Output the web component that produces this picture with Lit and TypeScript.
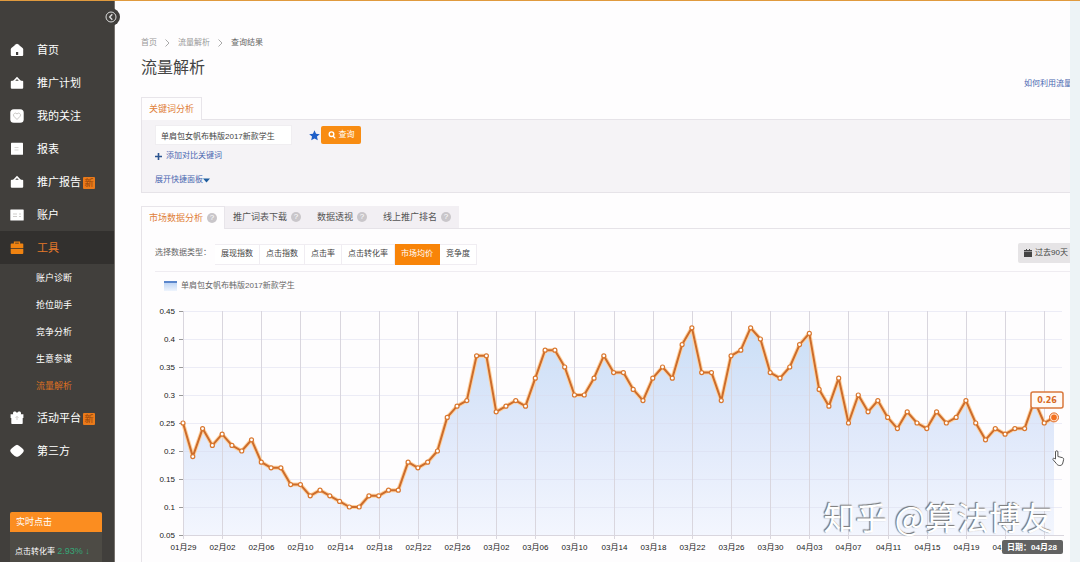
import { LitElement, html, svg, css, nothing } from "lit";
import { customElement, state, query } from "lit/decorators.js";
import { classMap } from "lit/directives/class-map.js";

const fontStack = css`"Liberation Sans", "Noto Sans CJK SC", sans-serif`;

const shapes: Record<string, unknown> = {
  home: svg`<path fill="#fff" d="M6 1.200a1.600 1.600 0 0 1 2 0l4.600 3.900c.4.400.6.800.6 1.400V12a1 1 0 0 1-1 1H1.800a1 1 0 0 1-1-1V6.500c0-.6.2-1 .6-1.400z"/><path fill="#413f3c" d="M6 9h2.200v3H6z"/>`,
  bag: svg`<path fill="none" stroke="#fff" stroke-width="1.600" d="M3.500 5.500 7 2l3.500 3.500"/><rect x=".8" y="4.800" width="12.400" height="8" rx="1" fill="#fff"/>`,
  heart: svg`<rect x=".3" y=".3" width="13.400" height="13.400" rx="3.500" fill="#fff"/><path fill="none" stroke="#c9c7c5" d="M7 10.500 3.800 7.200a1.900 1.900 0 0 1 3.200-2.200 1.900 1.900 0 0 1 3.200 2.200z"/>`,
  report: svg`<rect x="1" y=".8" width="12" height="12" rx=".6" fill="#fff"/><path stroke="#d8d6d4" d="M4.500 5.500h4M4.500 8h4"/>`,
  card: svg`<rect x=".3" y="1.500" width="13.400" height="11" rx=".6" fill="#fff"/><path stroke="#cfcdcb" d="M3 6h4M3 8.500h4M9 6h2M9 8.500h2"/>`,
  tools: svg`<path fill="none" stroke="#f08311" stroke-width="1.300" d="M4.500 3V1.200h5V3"/><path fill="#f08311" d="M1.500 2.500h11a.8.8 0 0 1 .8.8V7H.7V3.300a.8.8 0 0 1 .8-.8zM.7 7.800h12.600V12a1 1 0 0 1-1 1H1.700a1 1 0 0 1-1-1z"/>`,
  gift: svg`<path fill="#fff" d="M.6 3.300h2.600C2.200.8 5-.6 7 2 9-.6 11.800.8 10.800 3.300h2.600V7h-.7v5.300a.7.7 0 0 1-.7.7H2a.7.7 0 0 1-.7-.7V7H.6z"/><path stroke="#cfcdcb" fill="none" d="M5.500 6.500 7 5.500l1.500 1M7 6v3"/>`,
  diamond: svg`<path fill="#fff" d="M7 .8c.8 0 5 3.200 6.300 4.700.6.700.6 1.700 0 2.500-1.300 1.700-4 4.800-6.300 4.800S2 9.700.7 8c-.6-.8-.6-1.800 0-2.500C2 4 6.200.8 7 .8z"/>`,
};

interface MenuItem {
  label: string;
  icon: string;
  fresh?: boolean;
  current?: boolean;
  children?: string[];
}

const menu: MenuItem[] = [
  { label: "首页", icon: "home" },
  { label: "推广计划", icon: "bag" },
  { label: "我的关注", icon: "heart" },
  { label: "报表", icon: "report" },
  { label: "推广报告", icon: "bag", fresh: true },
  { label: "账户", icon: "card" },
  {
    label: "工具",
    icon: "tools",
    current: true,
    children: ["账户诊断", "抢位助手", "竞争分析", "生意参谋", "流量解析"],
  },
  { label: "活动平台", icon: "gift", fresh: true },
  { label: "第三方", icon: "diamond" },
];

@customElement("side-menu")
export class SideMenu extends LitElement {
  static styles = css`
    :host {
      display: flex;
      flex-direction: column;
      position: relative;
      box-sizing: border-box;
      padding-top: 32px;
      background: #413f3c;
      border-right: 1px solid #77726e;
      color: #fff;
      font-family: ${fontStack};
    }
    .collapse {
      position: absolute;
      top: 7px;
      right: -6px;
      width: 18px;
      height: 18px;
      padding: 0;
      border: 0;
      border-radius: 50%;
      background: #413f3c;
    }
    .collapse svg {
      display: block;
      width: 18px;
      height: 18px;
    }
    ul {
      list-style: none;
      margin: 0;
      padding: 0;
    }
    a {
      color: inherit;
      text-decoration: none;
    }
    .item {
      display: flex;
      align-items: center;
      height: 33px;
      padding-left: 10px;
      font-size: 11px;
    }
    .item.current {
      background: #32302e;
      color: #e5792a;
    }
    .icon {
      width: 14px;
      height: 14px;
      margin-right: 13px;
    }
    .fresh {
      margin: 2px 0 0 2px;
      width: 12px;
      height: 12px;
      border-radius: 1px;
      background: #ea7a1a;
      color: #8f3f08;
      font-size: 9px;
      line-height: 12px;
      text-align: center;
    }
    .sub {
      padding: 1px 0;
    }
    .sub a {
      display: block;
      height: 27px;
      padding-left: 36px;
      font-size: 9px;
      line-height: 27px;
    }
    .sub .current {
      color: #dd7022;
    }
    .live {
      margin: 45px 12px 0 10px;
      flex: 1;
      background: #4d4b45;
      border-radius: 2px 2px 0 0;
      font-size: 8px;
    }
    .live h2 {
      margin: 0;
      padding-left: 6px;
      border-radius: 2px 2px 0 0;
      background: #fb8d20;
      font-size: 9px;
      font-weight: 400;
      line-height: 20px;
    }
    .live p {
      margin: 0;
      padding: 9px 0 0 5px;
      line-height: 20px;
      white-space: nowrap;
    }
    .rate {
      color: #35a777;
      font-size: 9px;
    }
  `;

  render() {
    return html`
      <button class="collapse" aria-label="收起菜单">
        <svg viewBox="0 0 18 18" fill="none" stroke="#ddd">
          <circle cx="9" cy="9" r="5" />
          <path d="M10.300 6.300 7.700 9l2.600 2.700" stroke-width="1.400" />
        </svg>
      </button>
      <nav>
        <ul>
          ${menu.map(
            (m) => html`<li>
              <a href="#" class=${classMap({ item: true, current: !!m.current })}>
                <svg class="icon" viewBox="0 0 14 14">${shapes[m.icon]}</svg>
                ${m.label}${m.fresh ? html`<span class="fresh">新</span>` : nothing}
              </a>
              ${m.children
                ? html`<ul class="sub">
                    ${m.children.map(
                      (c) => html`<li><a href="#" class=${classMap({ current: c === "流量解析" })}>${c}</a></li>`
                    )}
                  </ul>`
                : nothing}
            </li>`
          )}
        </ul>
      </nav>
      <section class="live">
        <h2>实时点击</h2>
        <p>点击转化率 <span class="rate">2.93% ↓</span></p>
      </section>
    `;
  }
}

const prices = [
  25, 19, 24, 21, 23, 21, 20, 22, 18, 17, 17, 14, 14, 12, 13, 12, 11, 10, 10, 12, 12, 13, 13, 18, 17, 18, 20, 26, 28,
  29, 37, 37, 27, 28, 29, 28, 33, 38, 38, 35, 30, 30, 33, 37, 34, 34, 31, 29, 33, 35, 33, 39, 42, 34, 34, 29, 37, 38,
  42, 40, 34, 33, 35, 39, 41, 31, 28, 33, 25, 30, 27, 29, 26, 24, 27, 25, 24, 27, 25, 26, 29, 25, 22, 24, 23, 24, 24,
  29, 25, 26,
].map((v) => v / 100);

const yTicks = [0.45, 0.4, 0.35, 0.3, 0.25, 0.2, 0.15, 0.1, 0.05];

const dayLabel = (index: number) => {
  const d = new Date(Date.UTC(2017, 0, 29 + index));
  const two = (n: number) => String(n).padStart(2, "0");
  return `${two(d.getUTCMonth() + 1)}月${two(d.getUTCDate())}`;
};

@customElement("price-chart")
export class PriceChart extends LitElement {
  static styles = css`
    :host {
      display: block;
      height: 262px;
      overflow: hidden;
    }
    svg {
      display: block;
      width: 100%;
      height: 100%;
      font-family: ${fontStack};
      font-size: 8px;
    }
    .grid {
      stroke: #d9d6de;
    }
    .row {
      stroke: #efeaf1;
    }
    .row.over {
      stroke: #d9dcee;
      stroke-opacity: 0.5;
    }
    .tick {
      stroke: #999;
    }
    .label {
      fill: #222;
    }
    .glow {
      fill: none;
      stroke: #ffd2a0;
      stroke-width: 4;
      stroke-linejoin: round;
    }
    .line {
      fill: none;
      stroke: #cc6c2c;
      stroke-width: 2;
      stroke-linejoin: round;
    }
    .dot {
      fill: #fff;
      stroke: #d9772f;
      stroke-width: 1.2;
    }
    .value {
      fill: #d86a25;
      font-family: "DejaVu Sans", sans-serif;
      font-size: 8px;
      font-weight: 700;
    }
    .date {
      fill: #fff;
      font-weight: 700;
    }
  `;

  @state() private width = 928;
  private observer = new ResizeObserver((e) => {
    this.width = e[0].contentRect.width;
  });

  connectedCallback() {
    super.connectedCallback();
    this.observer.observe(this);
  }

  disconnectedCallback() {
    this.observer.disconnect();
    super.disconnectedCallback();
  }

  render() {
    const left = 41;
    const right = this.width - 16;
    const top = 11;
    const bottom = 235;
    const last = prices.length - 1;
    const x = (i: number) => left + ((right - left) * i) / last;
    const y = (v: number) => bottom - ((v - 0.05) / 0.4) * (bottom - top);
    const points = prices.map((v, i) => `${x(i).toFixed(1)},${y(v).toFixed(1)}`).join(" ");
    const days = prices.map((_, i) => i).filter((i) => i % 4 === 0);
    const lx = x(last);
    const ly = y(prices[last]);

    return html`<svg role="img" aria-label="市场均价">
      <defs>
        <linearGradient id="fill" gradientUnits="userSpaceOnUse" x1="0" y1="20" x2="0" y2=${bottom}>
          <stop offset="0" stop-color="#c9def6" />
          <stop offset=".5" stop-color="#dfe8fa" />
          <stop offset="1" stop-color="#f3f6fe" />
        </linearGradient>
      </defs>
      <polygon fill="url(#fill)" points="${left},${bottom} ${points} ${lx},${bottom}" />
      ${yTicks.map((t) => {
        const ty = Math.round(y(t)) + 0.5;
        return svg`<line class="row over" x1=${left} x2=${right + 8} y1=${ty} y2=${ty} />
          <line class="tick" x1=${left - 4} x2=${left} y1=${ty} y2=${ty} />
          <text class="label" x=${left - 8} y=${ty + 2} text-anchor="end">${t}</text>`;
      })}
      ${days.map((i) => {
        const tx = Math.round(x(i)) + 0.5;
        return svg`<line class="grid" x1=${tx} x2=${tx} y1=${top} y2=${bottom + 4} />
          ${
            last - i > 1
              ? svg`<text class="label" x=${tx} y="250" text-anchor="middle">${dayLabel(i)}</text>`
              : nothing
          }`;
      })}
      <line class="grid" x1=${left} x2=${right + 10} y1=${bottom + 0.5} y2=${bottom + 0.5} />
      <polyline class="glow" points=${points} />
      <polyline class="line" points=${points} />
      ${prices.map((v, i) => svg`<circle class="dot" cx=${x(i)} cy=${y(v)} r="2" />`)}
      <circle cx=${lx} cy=${ly} r="4.500" fill="#ffe3cf" stroke="#e2691f" />
      <circle cx=${lx} cy=${ly} r="2.800" fill="#f2701f" />
      <rect x=${lx - 23} y="92" width="32" height="16" rx="2" fill="#fffaf6" stroke="#d9783d" stroke-width="1.500" />
      <text class="value" x=${lx - 7} y="103" text-anchor="middle">0.26</text>
      <rect x=${lx - 52} y="240" width="61" height="14" rx="2" fill="#626262" />
      <text class="date" x=${lx - 22} y="250" text-anchor="middle">日期：${dayLabel(last)}</text>
      <path
        transform="translate(${lx - 2} 150)"
        fill="#fff"
        stroke="#555"
        stroke-linejoin="round"
        d="M3.500 9V2a1.200 1.200 0 0 1 2.400 0v4.500l4.600 1.200c1 .3 1.300 1 1.100 2L10.800 13c-.4 1.700-1.300 2.500-3 2.500-1.600 0-2.500-.6-3.300-1.800L1 9.600c-.4-1 .5-1.700 1.300-1.200z"
      />
    </svg>`;
  }
}

@customElement("app-root")
export class AppRoot extends LitElement {
  static styles = css`
    :host {
      display: grid;
      grid-template-columns: 115px minmax(0, 1fr) 10px;
      box-sizing: border-box;
      min-height: 100vh;
      border-top: 1px solid #e09a3e;
      background: #edf3f6;
      color: #666;
      font-family: ${fontStack};
      font-size: 8px;
      line-height: 12px;
      overflow: hidden;
    }
    side-menu {
      z-index: 1;
    }
    main {
      position: relative;
      padding: 36px 0 0 26px;
      background: #fefdfe;
      overflow: hidden;
    }
    a {
      color: #4866b0;
      text-decoration: none;
    }
    .crumbs {
      display: flex;
      align-items: center;
      gap: 8px;
    }
    .crumbs a {
      color: #999;
    }
    .chevron {
      width: 5px;
      height: 8px;
      fill: none;
      stroke: #aaa;
    }
    h1 {
      margin: 9px 0 0;
      color: #444;
      font-size: 16px;
      font-weight: 400;
      line-height: 20px;
    }
    .help {
      display: flex;
      justify-content: flex-end;
      height: 19px;
    }
    .help a {
      width: 46px;
      overflow: hidden;
      white-space: nowrap;
    }
    .tabs {
      display: flex;
    }
    .tab {
      display: flex;
      align-items: center;
      gap: 4px;
      height: 22px;
      padding: 0 8px;
      border: 0;
      background: #f2eff3;
      color: #555;
      font: inherit;
      font-size: 9px;
    }
    .tab.active {
      margin-bottom: -1px;
      height: 23px;
      padding: 0 7px;
      border: 1px solid #e8e5ea;
      border-bottom: 0;
      background: #fefdfe;
      color: #e0803a;
      z-index: 1;
    }
    .hint {
      display: inline-block;
      width: 10px;
      height: 10px;
      border-radius: 50%;
      background: #c9c6ca;
      color: #fff;
      font-size: 8px;
      line-height: 10px;
      text-align: center;
    }
    .search {
      box-sizing: border-box;
      padding: 5px 0 6px 13px;
      border: 1px solid #e6e3e8;
      border-right: 0;
      background: #f5f3f6;
    }
    .query {
      display: flex;
      align-items: center;
    }
    .query input {
      box-sizing: border-box;
      width: 137px;
      height: 20px;
      margin-right: 17px;
      padding: 0 5px;
      border: 1px solid #f0eef1;
      background: #fff;
      color: #444;
      font: inherit;
    }
    .star {
      width: 11px;
      height: 11px;
      margin-right: 1px;
    }
    .go {
      display: flex;
      align-items: center;
      justify-content: center;
      gap: 3px;
      width: 40px;
      height: 18px;
      padding: 0;
      border: 0;
      border-radius: 2px;
      background: #f88c12;
      color: #fff;
      font: inherit;
    }
    .go svg {
      width: 8px;
      height: 8px;
    }
    .link {
      display: flex;
      align-items: center;
      height: 12px;
      margin-top: 5px;
    }
    .link + .link {
      margin-top: 12px;
    }
    .plus {
      width: 7px;
      height: 7px;
      margin-right: 4px;
    }
    .caret {
      width: 7px;
      height: 5px;
    }
    .results {
      margin-top: 13px;
    }
    .panel {
      border-top: 1px solid #e6e3e8;
      border-left: 1px solid #e6e3e8;
    }
    .filter {
      display: flex;
      align-items: center;
      box-sizing: border-box;
      height: 43px;
      margin-left: 13px;
      padding-top: 6px;
      border-bottom: 1px solid #efecf1;
    }
    .types {
      display: flex;
      margin-left: 4px;
      padding-top: 2px;
    }
    .types button {
      height: 21px;
      padding: 0 6px;
      border: 1px solid #f0edf2;
      border-left: 0;
      background: #fff;
      color: #444;
      font: inherit;
    }
    .types .on {
      border-color: #f88408;
      background: #f88408;
      color: #fff;
    }
    .range {
      display: flex;
      align-items: center;
      gap: 3px;
      width: 52px;
      height: 20px;
      margin-left: auto;
      padding: 0 0 0 6px;
      border: 0;
      border-radius: 2px 0 0 2px;
      background: #e6e4e6;
      color: #444;
      font: inherit;
      white-space: nowrap;
    }
    .range svg {
      width: 8px;
      height: 8px;
    }
    .legend {
      display: flex;
      align-items: center;
      gap: 4px;
      height: 28px;
      padding-left: 22px;
    }
    .swatch {
      width: 13px;
      height: 8px;
      border-top: 2px solid #5a86cc;
      background: linear-gradient(#bfd5f4, #eef4fd);
    }
    .watermark {
      position: absolute;
      right: 17px;
      bottom: 26px;
      color: #fff;
      font-family: "Noto Sans CJK SC", sans-serif;
      font-size: 32px;
      font-weight: 400;
      line-height: 40px;
      text-shadow: -1px -1px 1px #777, -1px 0 1px #999;
    }
  `;

  @state() private type = "市场均价";
  @state() private tab = "市场数据分析";
  @query("#keyword") private keyword!: HTMLInputElement;

  private chevron = html`<svg class="chevron" viewBox="0 0 5 8"><path d="M.5.500 4 4 .5 7.500" /></svg>`;

  render() {
    return html`
      <side-menu></side-menu>
      <main>
        <nav class="crumbs">
          <a href="#">首页</a>${this.chevron}<a href="#">流量解析</a>${this.chevron}<span>查询结果</span>
        </nav>
        <h1>流量解析</h1>
        <div class="help"><a href="#">如何利用流量解析</a></div>
        <section>
          <div class="tabs"><button class="tab active">关键词分析</button></div>
          <div class="search">
            <div class="query">
              <input id="keyword" aria-label="关键词" value="单肩包女帆布韩版2017新款学生" />
              <svg class="star" viewBox="0 0 12 12">
                <path fill="#1f5fc8" d="m6 .3 1.700 3.800 4.100.4-3.100 2.700.9 4.100L6 9.200l-3.600 2.100.9-4.100L.2 4.500l4.100-.4z" />
              </svg>
              <button class="go" @click=${() => this.keyword.focus()}>
                <svg viewBox="0 0 8 8" fill="none" stroke="#fff" stroke-width="1.400">
                  <circle cx="3.500" cy="3.200" r="2.300" />
                  <path d="M5 5l2.200 2.400" />
                </svg>
                查询
              </button>
            </div>
            <div class="link">
              <svg class="plus" viewBox="0 0 7 7"><path stroke="#2c5490" stroke-width="1.600" d="M3.500 0v7M0 3.500h7" /></svg>
              <a href="#">添加对比关键词</a>
            </div>
            <div class="link">
              <a href="#">展开快捷面板</a>
              <svg class="caret" viewBox="0 0 7 5"><path fill="#1d5c9e" d="M0 .5h7L3.500 4.500z" /></svg>
            </div>
          </div>
        </section>
        <section class="results">
          <div class="tabs">
            ${["市场数据分析", "推广词表下载", "数据透视", "线上推广排名"].map(
              (t) => html`<button
                class=${classMap({ tab: true, active: t === this.tab })}
                @click=${() => (this.tab = t)}
              >
                ${t}<span class="hint">?</span>
              </button>`
            )}
          </div>
          <div class="panel">
            <div class="filter">
              <span>选择数据类型：</span>
              <div class="types">
                ${["展现指数", "点击指数", "点击率", "点击转化率", "市场均价", "竞争度"].map(
                  (t) => html`<button class=${classMap({ on: t === this.type })} @click=${() => (this.type = t)}>
                    ${t}
                  </button>`
                )}
              </div>
              <button class="range">
                <svg viewBox="0 0 8 8"><path fill="#444" d="M0 1h2V0h1v1h2V0h1v1h2v1.500H0zM0 3h8v5H0z" /></svg>
                过去90天
              </button>
            </div>
            <div class="legend"><span class="swatch"></span>单肩包女帆布韩版2017新款学生</div>
            <price-chart></price-chart>
          </div>
        </section>
        <div class="watermark">知乎 @算法博友</div>
      </main>
    `;
  }
}
